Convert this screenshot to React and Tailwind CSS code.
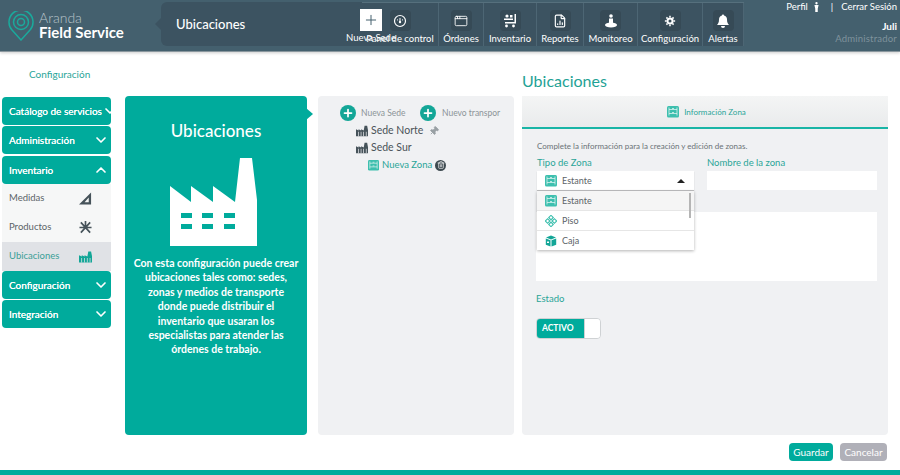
import { ChevronDown, ChevronUp, Plus, AppWindow, FileChartColumn, Pin, Trash2 } from 'lucide-react'

const Factory = ({ className }) => (
  <svg viewBox="0 0 88 88" className={className} fill="currentColor">
    <path d="M0 28 L21 44 L21 28 L43 44 L43 28 L65 44 L70 0 L82 0 L87 42 L87 88 L0 88 Z" />
    <g fill="#00ab9c">
      <rect x="11" y="55" width="11" height="5" />
      <rect x="32" y="55" width="11" height="5" />
      <rect x="54" y="55" width="11" height="5" />
      <rect x="11" y="66" width="11" height="5" />
      <rect x="32" y="66" width="11" height="5" />
      <rect x="54" y="66" width="11" height="5" />
    </g>
  </svg>
)

const SmallFactory = ({ className, stripe = '#f0f1f3' }) => (
  <svg viewBox="0 0 14 12" className={className} fill="currentColor">
    <path d="M0 4 L3 5.500 V4 L6 5.500 V4 L9 5.500 L10 0 H13 L14 5 V12 H0 Z" />
    <path d="M2.500 7h.8v5h-.8zM5.500 7h.8v5h-.8zM8.500 7h.8v5h-.8zM11.500 7h.8v5h-.8z" fill={stripe} />
  </svg>
)

const Shelf = ({ className }) => (
  <svg viewBox="0 0 12 12" className={className}>
    <rect x="0" y="0" width="12" height="11.500" rx="1.500" fill="#3dbfae" />
    <path d="M2 3.500h8M2 7.500h8M2 1.500v8M10 1.500v8" stroke="#d9f3ef" strokeWidth="0.800" fill="none" />
    <path d="M5 2.500h2M5 6.500h2" stroke="#d9f3ef" strokeWidth="0.800" />
  </svg>
)

const FloorIcon = ({ className }) => (
  <svg viewBox="0 0 12 12" className={className} fill="none" stroke="#3dbfae" strokeWidth="1.100">
    <rect x="4.400" y="1" width="3.200" height="3.200" transform="rotate(45 6 2.600)" />
    <rect x="4.400" y="7.800" width="3.200" height="3.200" transform="rotate(45 6 9.400)" />
    <rect x="1" y="4.400" width="3.200" height="3.200" transform="rotate(45 2.600 6)" />
    <rect x="7.800" y="4.400" width="3.200" height="3.200" transform="rotate(45 9.400 6)" />
  </svg>
)

const BoxIcon = ({ className }) => (
  <svg viewBox="0 0 12 12" className={className} fill="#13a697">
    <path d="M1 2.500 L6 0.500 L11 2.500 L6 4.500 Z" />
    <path d="M0.800 3.500 L5.500 5.300 V11.500 L0.800 9.700 Z M6.500 5.300 L11.200 3.500 V9.700 L6.500 11.500 Z" />
    <rect x="2" y="6.500" width="2" height="1.500" fill="#fff" />
  </svg>
)

const GaugeIcon = ({ className }) => (
  <svg viewBox="0 0 14 14" className={className} fill="none" stroke="currentColor">
    <circle cx="7" cy="7" r="5.500" strokeWidth="1.200" />
    <circle cx="7" cy="8" r="1.200" fill="currentColor" stroke="none" />
    <path d="M7 7V4M4 5.500l1 .8M10 5.500l-1 .8" strokeWidth="1" />
  </svg>
)

const CartIcon = ({ className }) => (
  <svg viewBox="0 0 14 14" className={className} fill="currentColor">
    <circle cx="4" cy="2" r="1.600" />
    <rect x="7" y="1" width="2.500" height="2.500" />
    <path d="M11.500 0H13v9.500H2V8h9.500zM1 4.500h9V6H1z" />
    <circle cx="3.500" cy="12" r="1.400" />
    <circle cx="10.500" cy="12" r="1.400" />
  </svg>
)

const MonitorIcon = ({ className }) => (
  <svg viewBox="0 0 14 14" className={className} fill="currentColor">
    <circle cx="7" cy="2" r="1.800" />
    <path d="M5 4.500h4v5H5z" />
    <ellipse cx="7" cy="11" rx="6" ry="2.400" />
  </svg>
)

const PersonIcon = ({ className }) => (
  <svg viewBox="0 0 6 12" className={className} fill="currentColor">
    <circle cx="3" cy="1.500" r="1.400" />
    <path d="M0.500 3.500h5L4.500 8v4h-3V8z" />
  </svg>
)

const GearIcon = ({ className }) => (
  <svg viewBox="0 0 14 14" className={className}>
    <circle cx="7" cy="7" r="3" fill="none" stroke="currentColor" strokeWidth="2.400" />
    <path d="M7 1v12M1 7h12M2.800 2.800l8.400 8.400M11.200 2.800l-8.400 8.400" stroke="currentColor" strokeWidth="1.800" strokeDasharray="2 8" />
  </svg>
)

const BellSolid = ({ className }) => (
  <svg viewBox="0 0 14 14" className={className} fill="currentColor">
    <path d="M7 0.500c.6 0 1 .4 1 1 2 .5 3 2 3 4 0 3 .8 4 2 5.500H1c1.200-1.500 2-2.500 2-5.500 0-2 1-3.500 3-4 0-.6.400-1 1-1z" />
    <path d="M5 12h4a2 2 0 0 1-4 0z" />
  </svg>
)

const Ruler = ({ className }) => (
  <svg viewBox="0 0 14 14" className={className} fill="currentColor">
    <path fillRule="evenodd" d="M13 0.500V13.500H0zM10.500 6 6 11h4.500z" />
  </svg>
)

const Wrenches = ({ className }) => (
  <svg viewBox="0 0 14 14" className={className} stroke="currentColor" strokeWidth="1.800" fill="none">
    <path d="M2 1.500 12 12.500M12 1.500 2 12.500M7 0v6M0.500 7h13" />
  </svg>
)

const navItems = [
  { label: 'Panel de control', w: 'w-[77px]', icon: <GaugeIcon className="w-3.5 h-3.5" /> },
  { label: 'Órdenes', w: 'w-[45px]', icon: <AppWindow className="w-3.5 h-3.5" strokeWidth={1.5} /> },
  { label: 'Inventario', w: 'w-[53px]', icon: <CartIcon className="w-3.5 h-3.5" /> },
  { label: 'Reportes', w: 'w-[47px]', icon: <FileChartColumn className="w-3.5 h-3.5" strokeWidth={2} /> },
  { label: 'Monitoreo', w: 'w-[54px]', icon: <MonitorIcon className="w-3.5 h-3.5" /> },
  { label: 'Configuración', w: 'w-[65px]', icon: <GearIcon className="w-3 h-3" /> },
  { label: 'Alertas', w: 'w-[41px]', icon: <BellSolid className="w-3.5 h-3.5" /> },
]

const SideHead = ({ label, open }) => (
  <div className="h-[28px] bg-[#00ab9c] rounded-sm flex items-center justify-between pl-[7px] pr-[2px] text-white text-[10px] whitespace-nowrap [text-shadow:0_0_0.3px_white]">
    <span>{label}</span>
    {open ? <ChevronUp className="w-4 h-4 shrink-0" strokeWidth={2.5} /> : <ChevronDown className="w-4 h-4 shrink-0" strokeWidth={2.5} />}
  </div>
)

const SideItem = ({ label, icon, active }) => (
  <div className={`h-[29px] flex items-center justify-between pl-[7px] pr-[19px] text-[9.500px] ${active ? 'bg-[#e0e2e6] text-[#3a9f96]' : 'bg-[#f6f7f7] text-[#5c6468]'}`}>
    <span>{label}</span>
    {icon}
  </div>
)

const App = () => {
  return (
    <div className="w-[900px] h-[475px] bg-white flex flex-col overflow-hidden font-['Lato',sans-serif]">
      {/* Header */}
      <div className="h-[52px] shrink-0 bg-[#44606e] border-b border-[#8a979e] flex shadow-[0_1px_3px_rgba(0,0,0,0.2)]">
        <div className="w-[161px] flex items-center pl-[8px] gap-[5px] text-white">
          <svg viewBox="0 0 26 30" className="w-[26px] h-[30px] text-[#1ba99c] mt-[1px]" fill="none" stroke="currentColor">
            <path strokeWidth="1.500" d="M13 29 L4 19 A12 12 0 1 1 22 19 Z" />
            <circle cx="13" cy="11" r="7.500" strokeWidth="1.500" />
            <circle cx="13" cy="11" r="3.500" strokeWidth="1.500" />
          </svg>
          <div className="leading-none">
            <div className="text-[14px] text-[#b8c4ca] font-light leading-[13px]">Aranda</div>
            <div className="text-[15px] font-bold leading-[16px] whitespace-nowrap">Field Service</div>
          </div>
        </div>
        <div className="relative w-[583px] h-[44px] mt-[2px] bg-[#3c5361] rounded-l-md flex">
          <div className="absolute left-[-6px] top-[16px] w-0 h-0 border-y-[6px] border-y-transparent border-r-[6px] border-r-[#3c5361]" />
          <div className="w-[201px] pl-[15px] pt-[13px] text-white text-[13px] font-medium">Ubicaciones</div>
          <div className="flex border-t border-[#56707d]">
            {navItems.map((item) => (
              <div key={item.label} className={`${item.w} flex flex-col items-center border-r border-[#4d6674] pt-[7px]`}>
                <div className="w-[21px] h-[21px] bg-[#364a56] rounded-sm flex items-center justify-center text-white">{item.icon}</div>
                <div className="text-[9.500px] leading-[12px] mt-[2px] text-white whitespace-nowrap">{item.label}</div>
              </div>
            ))}
          </div>
          {/* Nueva Sede overlaps the first nav item */}
          <div className="absolute left-[199px] top-[7px] w-[22px] flex flex-col items-center">
            <div className="w-[22px] h-[22px] bg-white flex items-center justify-center text-[#44606e]">
              <Plus className="w-4 h-4" strokeWidth={1.5} />
            </div>
            <div className="text-[9.500px] leading-[12px] mt-[1px] text-white whitespace-nowrap">Nueva Sede</div>
          </div>
        </div>
        <div className="flex-1 text-right pr-[3px] pt-[1px] text-white text-[9.500px]">
          <div className="flex justify-end items-center gap-[6px] leading-[12px]">
            <span>Perfil</span>
            <PersonIcon className="w-[5px] h-[10px]" />
            <span className="ml-[6px]">|</span>
            <span className="ml-[2px]">Cerrar Sesión</span>
          </div>
          <div className="mt-[7px] text-[10px] font-bold leading-[12px]">Juli</div>
          <div className="text-[#7f929c] leading-[13px] tracking-[0.2px]">Administrador</div>
        </div>
      </div>

      {/* Title row */}
      <div className="h-[44px] shrink-0 flex">
        <div className="w-[522px] pl-[29px] pt-[15px] text-[10px] text-[#2aa598]">Configuración</div>
        <div className="pt-[18px] text-[16px] leading-[22px] text-[#1fa295]">Ubicaciones</div>
      </div>

      <div className="h-[339px] shrink-0 flex pl-[2px]">
        {/* Sidebar */}
        <div className="w-[109px] pt-[1px] flex flex-col">
          <SideHead label="Catálogo de servicios" />
          <div className="h-[1px]" />
          <SideHead label="Administración" />
          <div className="h-[2px]" />
          <SideHead label="Inventario" open />
          <SideItem label="Medidas" icon={<Ruler className="w-[13px] h-[13px] text-[#46535a]" />} />
          <SideItem label="Productos" icon={<Wrenches className="w-[13px] h-[13px] text-[#46535a]" />} />
          <SideItem label="Ubicaciones" active icon={<SmallFactory className="w-[13px] h-[12px] text-[#13a697]" stripe="#e0e2e6" />} />
          <SideHead label="Configuración" />
          <div className="h-[1px]" />
          <SideHead label="Integración" />
        </div>

        {/* Green panel */}
        <div className="relative ml-[14px] w-[182px] bg-[#00ab9c] rounded-sm flex flex-col items-center text-white">
          <div className="absolute right-[-6px] top-[12px] w-0 h-0 border-y-[6px] border-y-transparent border-l-[7px] border-l-[#00ab9c]" />
          <div className="mt-[24px] text-[17px] leading-[22px] font-medium">Ubicaciones</div>
          <Factory className="w-[88px] h-[88px] mt-[16px] mr-[5px]" />
          <p className="mt-[10px] px-[8px] text-center text-[10.500px] leading-[14.400px] font-bold">
            Con esta configuración puede crear ubicaciones tales como: sedes, zonas y medios de transporte donde puede distribuir el inventario que usaran los especialistas para atender las órdenes de trabajo.
          </p>
        </div>

        {/* Tree */}
        <div className="ml-[11px] w-[196px] bg-[#f0f1f3] rounded-sm">
          <div className="flex pl-[22px] pt-[8px] h-[26px] items-center overflow-hidden whitespace-nowrap text-[8.500px] text-[#8c9498]">
            <div className="w-[16px] h-[16px] rounded-full bg-[#13a697] flex items-center justify-center text-white shrink-0">
              <Plus className="w-3 h-3" strokeWidth={3.5} />
            </div>
            <span className="ml-[5px] w-[46px]">Nueva Sede</span>
            <div className="ml-[13px] w-[16px] h-[16px] rounded-full bg-[#13a697] flex items-center justify-center text-white shrink-0">
              <Plus className="w-3 h-3" strokeWidth={3.5} />
            </div>
            <span className="ml-[6px] w-[57px]">Nuevo transpor</span>
          </div>
          <div className="pl-[38px] text-[10.500px] text-[#4a5358]">
            <div className="h-[17px] flex items-center gap-[3px]">
              <SmallFactory className="w-3 h-3 text-[#46535a]" />
              <span>Sede Norte</span>
              <Pin className="w-2.5 h-2.5 ml-[3px] text-[#9aa1a5] rotate-45" fill="currentColor" />
            </div>
            <div className="h-[17px] flex items-center gap-[3px]">
              <SmallFactory className="w-3 h-3 text-[#46535a]" />
              <span>Sede Sur</span>
            </div>
            <div className="h-[18px] flex items-center gap-[3px] pl-[12px] text-[9.500px] text-[#2aa598]">
              <Shelf className="w-[11px] h-[11px]" />
              <span>Nueva Zona</span>
              <div className="w-[11px] h-[11px] rounded-full bg-[#3e4a50] flex items-center justify-center">
                <Trash2 className="w-2 h-2 text-white" />
              </div>
            </div>
          </div>
        </div>

        {/* Form */}
        <div className="ml-[8px] w-[366px] bg-[#f0f1f3] rounded-sm flex flex-col">
          <div className="h-[33px] bg-gradient-to-b from-[#f4f5f5] to-[#e9ebec] border-b-2 border-[#19b5a6] flex items-center justify-center gap-[5px] pl-[3px] text-[8px] text-[#2aa598]">
            <Shelf className="w-[12px] h-[12px]" />
            <span>Información Zona</span>
          </div>
          <div className="relative pl-[15px] pr-[11px] flex-1">
            <div className="mt-[11px] text-[8px] leading-[12px] text-[#6a7276]">Complete la información para la creación y edición de zonas.</div>
            <div className="flex gap-[13px] mt-[5px]">
              <div className="w-[157px]">
                <div className="text-[9.500px] leading-[12px] text-[#2aa598]">Tipo de Zona</div>
                <div className="mt-[2px] h-[19px] bg-white shadow-[0_1px_1px_rgba(0,0,0,0.2)] flex items-center pl-[8px] pr-[9px] gap-[5px] text-[9px] text-[#5c6468]">
                  <Shelf className="w-[12px] h-[12px]" />
                  <span className="flex-1">Estante</span>
                  <div className="w-0 h-0 border-x-[4px] border-x-transparent border-b-[4px] border-b-[#222]" />
                </div>
              </div>
              <div className="w-[170px]">
                <div className="text-[9.500px] leading-[12px] text-[#2aa598]">Nombre de la zona</div>
                <div className="mt-[2px] h-[19px] bg-white" />
              </div>
            </div>
            <div className="mt-[22px] -ml-[1px] h-[69px] bg-white" />
            <div className="mt-[12px] -ml-[1px] text-[9.500px] leading-[12px] text-[#2aa598]">Estado</div>
            <div className="mt-[13px] -ml-[1px] w-[65px] h-[21px] border border-[#cfd2d4] rounded-sm flex overflow-hidden">
              <div className="w-[47px] bg-[#00ab9c] text-white text-[8.500px] font-bold flex items-center pl-[5px]">ACTIVO</div>
              <div className="flex-1 bg-white border-l border-[#cfd2d4]" />
            </div>

            {/* Open dropdown */}
            <div className="absolute left-[15px] top-[62px] w-[157px] bg-white shadow-[0_1px_3px_rgba(0,0,0,0.3)] text-[9px] text-[#5c6468]">
              <div className="relative h-[20px] bg-[#f5f5f5] border-b border-[#e6e6e6] flex items-center gap-[5px] pl-[8px]">
                <Shelf className="w-[12px] h-[12px]" />
                <span>Estante</span>
                <div className="absolute right-[3px] top-[2px] w-[2px] h-[25px] bg-[#b5b5b5]" />
              </div>
              <div className="h-[20px] border-b border-[#e6e6e6] flex items-center gap-[5px] pl-[8px]">
                <FloorIcon className="w-[12px] h-[12px]" />
                <span>Piso</span>
              </div>
              <div className="h-[19px] flex items-center gap-[5px] pl-[8px]">
                <BoxIcon className="w-[12px] h-[12px]" />
                <span>Caja</span>
              </div>
            </div>
          </div>
        </div>
      </div>

      {/* Buttons */}
      <div className="flex-1 flex justify-end items-start pt-[8px] pr-[13px] gap-[7px] text-[10px] text-white">
        <button className="w-[44px] h-[18px] bg-[#00ab9c] rounded-sm">Guardar</button>
        <button className="w-[47px] h-[18px] bg-[#b0b0b8] rounded-sm">Cancelar</button>
      </div>
      <div className="h-[5px] bg-[#00ab9c] shrink-0" />
    </div>
  )
}

export default App
